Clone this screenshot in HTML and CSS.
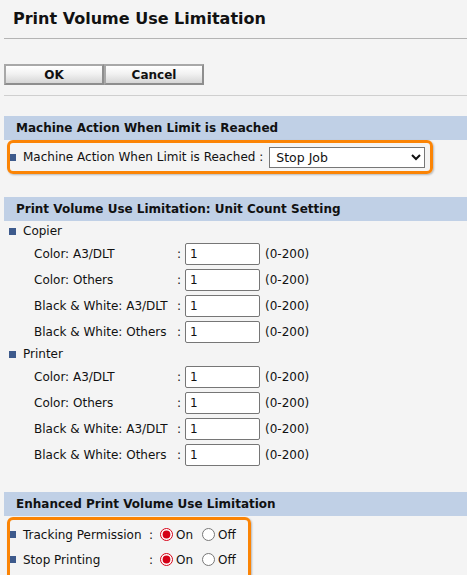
FILE: index.html
```html
<!DOCTYPE html>
<html lang="en">
<head>
    <meta charset="UTF-8">
    <title>Print Volume Use Limitation</title>
    <link rel="stylesheet" href="styles.css">
</head>
<body>

<div class="page">
    <h1 class="page-title">Print Volume Use Limitation</h1>

    <div class="button-bar">
        <button type="button" class="btn">OK</button><button type="button" class="btn">Cancel</button>
    </div>

    <!-- Machine action -->
    <h2 class="band">Machine Action When Limit is Reached</h2>
    <div class="hilite">
        <div class="item item-select">
            <span class="bullet"></span>
            <span>Machine Action When Limit is Reached :</span>
            <select class="action-select">
                <option selected>Stop Job</option>
                <option>Warning Only</option>
            </select>
        </div>
    </div>

    <!-- Unit count -->
    <h2 class="band band-gap">Print Volume Use Limitation: Unit Count Setting</h2>

    <div class="item group-head"><span class="bullet"></span><span>Copier</span></div>
    <div class="count-grid">
        <span>Color: A3/DLT</span><span class="colon">:</span><input type="text" class="num" value="1"><span>(0-200)</span>
        <span>Color: Others</span><span class="colon">:</span><input type="text" class="num" value="1"><span>(0-200)</span>
        <span>Black &amp; White: A3/DLT</span><span class="colon">:</span><input type="text" class="num" value="1"><span>(0-200)</span>
        <span>Black &amp; White: Others</span><span class="colon">:</span><input type="text" class="num" value="1"><span>(0-200)</span>
    </div>

    <div class="item group-head"><span class="bullet"></span><span>Printer</span></div>
    <div class="count-grid">
        <span>Color: A3/DLT</span><span class="colon">:</span><input type="text" class="num" value="1"><span>(0-200)</span>
        <span>Color: Others</span><span class="colon">:</span><input type="text" class="num" value="1"><span>(0-200)</span>
        <span>Black &amp; White: A3/DLT</span><span class="colon">:</span><input type="text" class="num" value="1"><span>(0-200)</span>
        <span>Black &amp; White: Others</span><span class="colon">:</span><input type="text" class="num" value="1"><span>(0-200)</span>
    </div>

    <!-- Enhanced limitation -->
    <h2 class="band band-gap2">Enhanced Print Volume Use Limitation</h2>
    <div class="hilite hilite-small">
        <div class="radio-grid">
            <span class="bullet"></span><span>Tracking Permission</span><span class="colon">:</span>
            <label class="opt"><input type="radio" name="track" checked>On</label>
            <label class="opt"><input type="radio" name="track">Off</label>

            <span class="bullet"></span><span>Stop Printing</span><span class="colon">:</span>
            <label class="opt"><input type="radio" name="stop" checked>On</label>
            <label class="opt"><input type="radio" name="stop">Off</label>
        </div>
    </div>
</div>

</body>
</html>
```

FILE: styles.css
```css
body {
    margin: 0;
    background-color: #f4f4f4;
    font-family: "DejaVu Sans", Verdana, sans-serif;
    font-size: 12px;
    color: #111;
}

.page {
    margin-left: 4px;
}

.page-title {
    margin: 0;
    padding: 8px 9px 0;
    height: 30px;
    font-size: 16px;
    line-height: 22px;
    font-weight: bold;
    border-bottom: 1px solid #b4b4b4;
}

.button-bar {
    margin-top: 25px;
    padding-bottom: 10px;
    height: 21px;
    border-bottom: 1px solid #cfcfcf;
    display: flex;
}

.btn {
    width: 100px;
    height: 21px;
    margin: 0;
    padding: 0;
    font-family: inherit;
    font-size: 12px;
    font-weight: bold;
    color: #111;
    border: 2px solid #8e8e8e;
    border-top-color: #a8a8a8;
    border-left-color: #a8a8a8;
    background: linear-gradient(#ffffff, #f2f2f2 45%, #d6d6d6);
}

.band {
    margin: 20px 0 0;
    height: 24px;
    padding-left: 12px;
    background-color: #c0d0e6;
    font-size: 12px;
    font-weight: bold;
    line-height: 24px;
}

.band-gap {
    margin-top: 23px;
}

.band-gap2 {
    margin-top: 26px;
}

.bullet {
    display: inline-block;
    width: 7px;
    height: 7px;
    background-color: #3d5a8c;
}

.item {
    display: flex;
    align-items: center;
    gap: 7px;
    padding-left: 5px;
}

/* orange frame drawn over the first bit of the row */
.hilite {
    position: relative;
    height: 34px;
}

.hilite::after {
    content: "";
    position: absolute;
    left: 3px;
    top: 0;
    width: 426px;
    height: 34px;
    box-sizing: border-box;
    border: 3px solid #fb8405;
    border-radius: 6px;
    box-shadow: 1px 1px 2px rgba(0, 0, 0, 0.25);
    pointer-events: none;
}

.item-select {
    height: 34px;
}

.action-select {
    margin-left: -1px;
    width: 156px;
    height: 21px;
    font-family: inherit;
    font-size: 12.5px;
    color: #111;
    background-color: #fff;
    border: 1px solid #777;
    border-radius: 0;
    padding: 0 2px;
}

.group-head {
    height: 18px;
    margin-top: 1px;
}

.count-grid {
    display: grid;
    grid-template-columns: 140px 11px 75px auto;
    grid-auto-rows: 22px;
    row-gap: 4px;
    align-items: center;
    padding-left: 30px;
    margin-top: 3px;
}

.count-grid + .group-head {
    margin-top: 2px;
}

.colon {
    padding-left: 3px;
}

.num {
    width: 75px;
    height: 22px;
    box-sizing: border-box;
    margin: 0;
    padding: 0 4px;
    font-family: inherit;
    font-size: 12px;
    color: #111;
    background-color: #fff;
    border: 1px solid #767676;
    border-radius: 2px;
}

.num + span {
    padding-left: 5px;
}

.hilite-small {
    margin-top: 1px;
    height: 60px;
}

.hilite-small::after {
    width: 244px;
    height: 64px;
}

.radio-grid {
    display: grid;
    grid-template-columns: 7px 130px 14px 42px auto;
    grid-auto-rows: 25px;
    align-items: center;
    padding: 5px 0 0 5px;
}

.radio-grid > span:nth-child(5n+2) {
    padding-left: 7px;
}

.opt {
    display: flex;
    align-items: center;
}

.opt input {
    width: 13px;
    height: 13px;
    margin: 0 3px 0 0;
    accent-color: #d40016;
}
```
